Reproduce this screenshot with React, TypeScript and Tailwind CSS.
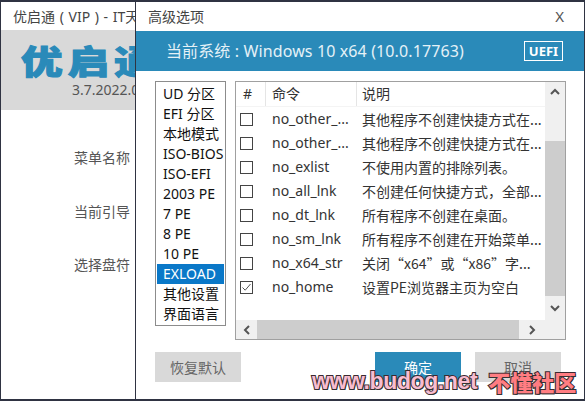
import React from "react";

// Tailwind can't name these stacks, so keep them in one spot
const UI_FONT = "font-['Noto_Sans','Noto_Sans_CJK_SC',sans-serif]";

const MENU_ITEMS = [
  "UD 分区",
  "EFI 分区",
  "本地模式",
  "ISO-BIOS",
  "ISO-EFI",
  "2003 PE",
  "7 PE",
  "8 PE",
  "10 PE",
  "EXLOAD",
  "其他设置",
  "界面语言",
];

const COMMANDS = [
  { name: "no_other_...", desc: "其他程序不创建快捷方式在...", checked: false },
  { name: "no_other_...", desc: "其他程序不创建快捷方式在...", checked: false },
  { name: "no_exlist", desc: "不使用内置的排除列表。", checked: false },
  { name: "no_all_lnk", desc: "不创建任何快捷方式，全部...", checked: false },
  { name: "no_dt_lnk", desc: "所有程序不创建在桌面。", checked: false },
  { name: "no_sm_lnk", desc: "所有程序不创建在开始菜单...", checked: false },
  { name: "no_x64_str", desc: "关闭“x64”或“x86”字...", checked: false },
  { name: "no_home", desc: "设置PE浏览器主页为空白", checked: true },
];

const Chevron = ({ dir }: { dir: "up" | "down" | "left" | "right" }) => {
  const points = {
    up: "2,8 6,4 10,8",
    down: "2,4 6,8 10,4",
    left: "8,2 4,6 8,10",
    right: "4,2 8,6 4,10",
  }[dir];
  return (
    <svg width="12" height="12" viewBox="0 0 12 12" fill="none">
      <polyline points={points} stroke="#555" strokeWidth="2" />
    </svg>
  );
};

const Checkbox = ({ checked }: { checked: boolean }) => (
  <div className="w-[13px] h-[13px] border border-[#444] bg-white flex items-center justify-center">
    {checked && (
      <svg width="11" height="11" viewBox="0 0 11 11" fill="none">
        <polyline points="1.5,5.5 4.2,8.2 9.5,2" stroke="#555" strokeWidth="1" />
      </svg>
    )}
  </div>
);

const MainWindow = () => (
  <div className="ml-px mt-0.5 w-[200px] h-[397px] bg-white flex flex-col">
    <div className="h-7 pl-3 flex items-center text-[14px] text-[#444] whitespace-nowrap [word-spacing:1px]">
      优启通 ( VIP ) - IT天空
    </div>
    <div className="h-20 bg-[#d9d9d9] flex flex-col pl-5 pt-[15px]">
      <div className="h-[34px] text-[33px] leading-[34px] font-black tracking-[4px] text-[#2a8ab9] whitespace-nowrap scale-x-[1.26] origin-left [-webkit-text-stroke:1px_#2a8ab9]">
        优启通
      </div>
      <div className="pl-[51px] mt-px text-[14px] leading-5 text-[#555] whitespace-nowrap">3.7.2022.0</div>
    </div>
    <div className="pl-[73px] pt-[38px] flex flex-col gap-[33.5px] text-[14px] leading-5 text-[#555]">
      <div>菜单名称</div>
      <div>当前引导</div>
      <div>选择盘符</div>
    </div>
  </div>
);

const MenuList = () => (
  <div className="w-[71px] h-[245px] border border-[#8c8c8c] px-px py-[2px] flex flex-col text-[14px] leading-5 text-[#111]">
    {MENU_ITEMS.map((item) => (
      <div
        key={item}
        className={`h-5 pl-[6px] whitespace-nowrap ${item === "EXLOAD" ? "bg-[#0a78c8] text-white" : ""}`}
      >
        {item}
      </div>
    ))}
  </div>
);

const CommandTable = () => (
  <div className="w-[331px] h-[259px] border border-[#a0a0a0] flex flex-col text-[14px] leading-6 text-[#333]">
    <div className="flex-1 flex min-h-0">
      <div className="flex-1">
        <div className="h-[25px] flex border-b border-[#f4f4f4]">
          <div className="w-[30px] pl-[7px] border-r border-[#e5e5e5]">#</div>
          <div className="w-[91px] pl-[6px] border-r border-[#e5e5e5]">命令</div>
          <div className="pl-[5px]">说明</div>
        </div>
        {COMMANDS.map((row, i) => (
          <div key={i} className="h-6 flex items-center whitespace-nowrap">
            <div className="w-[30px] pl-1">
              <Checkbox checked={row.checked} />
            </div>
            <div className="w-[91px] pl-[6px]">{row.name}</div>
            {/* CJK family first so the curly quotes come out full width */}
            <div className="pl-[5px] font-['Noto_Sans_CJK_SC',sans-serif]">{row.desc}</div>
          </div>
        ))}
      </div>
      {/* vertical scrollbar */}
      <div className="w-5 bg-[#f0f0f0] flex flex-col items-center">
        <div className="h-[20px] flex items-center justify-center">
          <Chevron dir="up" />
        </div>
        <div className="w-full h-[155px] mt-[39px] bg-[#cdcdcd]" />
        <div className="flex-1 flex items-center justify-center">
          <Chevron dir="down" />
        </div>
      </div>
    </div>
    {/* horizontal scrollbar */}
    <div className="h-[19px] bg-[#f0f0f0] flex items-center">
      <div className="w-[21px] flex justify-center">
        <Chevron dir="left" />
      </div>
      <div className="w-[262px] h-full bg-[#cdcdcd]" />
      <div className="w-[25px] flex justify-center">
        <Chevron dir="right" />
      </div>
    </div>
  </div>
);

const Dialog = () => (
  <div className="absolute left-[135px] top-0.5 w-[449px] h-[397px] bg-white border-l border-[#2f3342] flex flex-col">
    <div className="h-[29px] pl-3 pr-[20px] flex items-center justify-between text-[14px] text-[#444]">
      <span>高级选项</span>
      <span className="text-[15px] text-[#555]">X</span>
    </div>
    <div className="h-10 bg-[#2a8ab9] pl-[30px] pr-[21px] flex items-center justify-between text-white">
      <span className="text-[16px] tracking-[0.12px] text-[#e4f1f7] whitespace-nowrap">当前系统 : Windows 10 x64 (10.0.17763)</span>
      <span className="w-[39px] h-5 border border-white flex items-center justify-center text-[13px] font-bold leading-none">
        UEFI
      </span>
    </div>
    <div className="pl-[19px] pt-[10px] flex gap-[9px]">
      <MenuList />
      <CommandTable />
    </div>
    <div className="mt-[12px] pl-[19px] flex text-[14px]">
      <button className="w-[86px] h-[30px] bg-[#d9d9d9] text-[#666]">恢复默认</button>
      <button className="ml-[134px] w-[86px] h-[30px] bg-[#2a8ab9] text-white">确定</button>
      <button className="ml-[14px] w-[86px] h-[30px] bg-[#d9d9d9] text-[#666]">取消</button>
    </div>
  </div>
);

const Watermark = () => (
  <div className="absolute left-[312px] top-[368px] flex items-center gap-[11px] whitespace-nowrap font-bold [paint-order:stroke_fill]">
    <span className="text-[23px] leading-[26px] tracking-[-0.4px] text-[#f8bccf] font-['Liberation_Sans',sans-serif] [-webkit-text-stroke:2px_#3a2a30] [paint-order:stroke_fill] [text-shadow:1px_1px_0_#333]">
      www.budog.net
    </span>
    <span className="text-[22px] leading-[26px] text-[#ff7d82] font-['Noto_Sans_CJK_SC',sans-serif] font-black [-webkit-text-stroke:2px_#3a2a30] [paint-order:stroke_fill] [text-shadow:1px_1px_0_#333]">
      不懂社区
    </span>
  </div>
);

export default function App() {
  return (
    <div className={`relative w-[585px] h-[401px] overflow-hidden bg-[#2f3342] ${UI_FONT}`}>
      <MainWindow />
      <Dialog />
      <Watermark />
    </div>
  );
}
